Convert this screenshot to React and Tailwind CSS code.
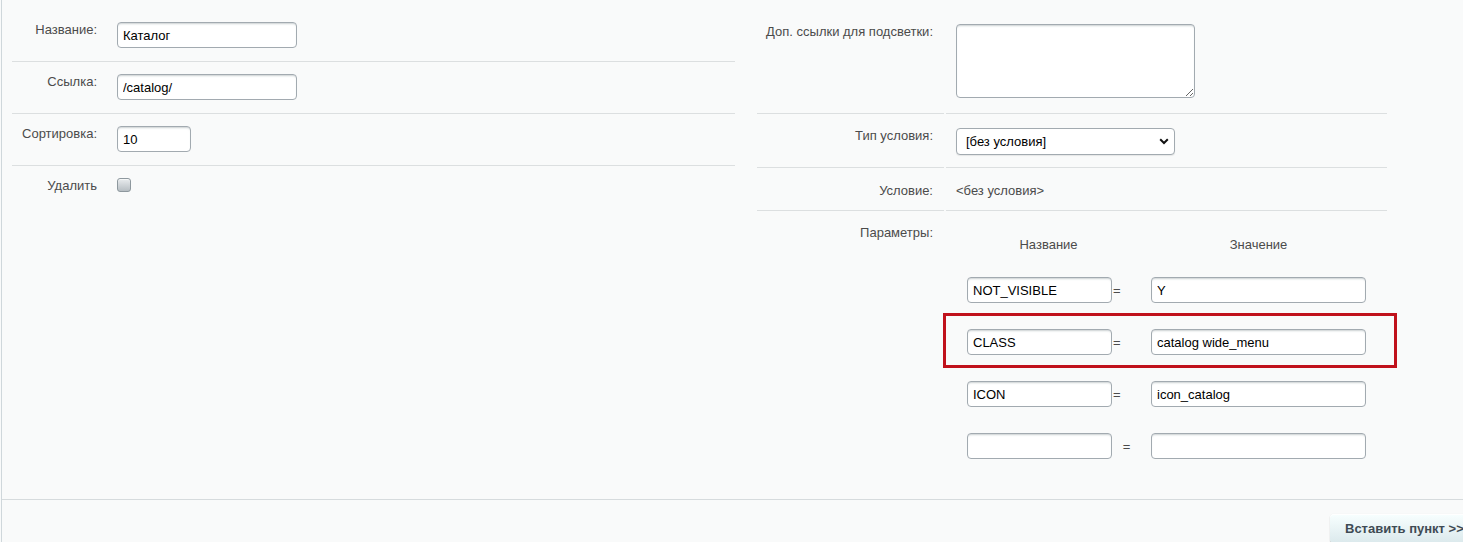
import React from "react";

const inputCls =
  "block h-[26px] rounded-[4px] border border-[#a2aab0] bg-white px-[5px] text-[13px] text-black outline-none shadow-[inset_0_2px_2px_-1px_rgba(180,188,191,0.7)]";

function LeftRow({ label, children, last }) {
  return (
    <div className={"flex " + (last ? "" : "border-b border-[#dcdfe0]")}>
      <div className="w-[95px] shrink-0 pt-[12px] pr-[10px] text-right leading-[15px] text-[#4b4b4b]">
        {label}
      </div>
      <div className="pl-[10px] pt-[12px] pb-[13px]">{children}</div>
    </div>
  );
}

function RightRow({ label, labelPt, cellCls, children, last }) {
  const b = last ? "" : "border-b border-[#dcdfe0]";
  return (
    <div className="flex gap-[2px]">
      <div
        className={
          "w-[187px] shrink-0 pr-[11px] text-right leading-[15px] text-[#4b4b4b] " +
          labelPt +
          " " +
          b
        }
      >
        {label}
      </div>
      <div className={"flex-1 pl-[10px] " + cellCls + " " + b}>{children}</div>
    </div>
  );
}

function ParamRow({ name, value, eqCentered, highlight }) {
  return (
    <div className="relative flex h-[26px] items-center">
      {highlight && (
        <div className="pointer-events-none absolute left-[-13px] top-[-16px] h-[55px] w-[454px] border-[3px] border-[#c0111b]" />
      )}
      <div className="w-[156px] shrink-0 pl-[11px]">
        <input className={inputCls + " w-[145px]"} defaultValue={name} />
      </div>
      <div
        className={
          "w-[29px] shrink-0 leading-[15px] text-[#4b4b4b] " +
          (eqCentered ? "text-center" : "pl-[1px]")
        }
      >
        =
      </div>
      <div className="pl-[10px]">
        <input className={inputCls + " w-[215px]"} defaultValue={value} />
      </div>
    </div>
  );
}

export default function App() {
  return (
    <div className="h-[542px] w-[1463px] overflow-hidden bg-[#f9fafa] font-['Liberation_Sans',Arial,sans-serif] text-[13px]">
      <div className="ml-[1px] flex h-full flex-col border-l border-[#cfd7db]">
        {/* form body */}
        <div className="flex h-[500px] shrink-0 border-b border-[#d6dbdd] pl-[10px] pt-[10px]">
          {/* left column */}
          <div className="w-[723px] shrink-0">
            <LeftRow label="Название:">
              <input className={inputCls + " w-[180px]"} defaultValue="Каталог" />
            </LeftRow>
            <LeftRow label="Ссылка:">
              <input className={inputCls + " w-[180px]"} defaultValue="/catalog/" />
            </LeftRow>
            <LeftRow label="Сортировка:">
              <input className={inputCls + " w-[74px]"} defaultValue="10" />
            </LeftRow>
            <LeftRow label="Удалить" last>
              <input
                type="checkbox"
                className="block h-[14px] w-[14px] appearance-none rounded-[3px] border border-[#8e989e] bg-gradient-to-b from-[#e9ecee] to-[#b7bec3] shadow-[inset_0_1px_0_rgba(255,255,255,0.6)]"
              />
            </LeftRow>
          </div>

          {/* right column */}
          <div className="ml-[22px] w-[630px] shrink-0">
            <RightRow
              label="Доп. ссылки для подсветки:"
              labelPt="pt-[14px]"
              cellCls="pt-[14px] pb-[15px]"
            >
              <textarea className="block h-[74px] w-[239px] rounded-[4px] border border-[#a2aab0] bg-white px-[5px] py-[3px] text-[13px] text-black outline-none shadow-[inset_0_2px_2px_-1px_rgba(180,188,191,0.7)]" />
            </RightRow>
            <RightRow
              label="Тип условия:"
              labelPt="pt-[14px]"
              cellCls="pt-[14px] pb-[12px]"
            >
              <div className="relative w-[219px]">
                <select className="block h-[27px] w-[219px] appearance-none rounded-[4px] border border-[#a2aab0] bg-white pl-[9px] text-[13px] text-black outline-none shadow-[0_1px_1px_rgba(0,0,0,0.08)]">
                  <option>[без условия]</option>
                </select>
                <svg
                  className="pointer-events-none absolute right-[6px] top-[10px]"
                  width="10"
                  height="7"
                  viewBox="0 0 10 7"
                >
                  <path
                    d="M1.2 1.3 L5 5 L8.8 1.3"
                    fill="none"
                    stroke="#111"
                    strokeWidth="2"
                  />
                </svg>
              </div>
            </RightRow>
            <RightRow
              label="Условие:"
              labelPt="pt-[15px]"
              cellCls="pt-[15px] pb-[12px] leading-[15px] text-[#4b4b4b]"
            >
              &lt;без условия&gt;
            </RightRow>
            <RightRow
              label="Параметры:"
              labelPt="pt-[14px]"
              cellCls="pt-[26px]"
              last
            >
              <div className="flex leading-[15px] text-[#4b4b4b]">
                <div className="w-[185px] text-center">Название</div>
                <div className="w-[235px] text-center">Значение</div>
              </div>
              <div className="mt-[25px] flex flex-col gap-[26px]">
                <ParamRow name="NOT_VISIBLE" value="Y" />
                <ParamRow name="CLASS" value="catalog wide_menu" highlight />
                <ParamRow name="ICON" value="icon_catalog" />
                <ParamRow name="" value="" eqCentered />
              </div>
            </RightRow>
          </div>
        </div>

        {/* button bar */}
        <div className="flex pl-[1328px] pt-[14px]">
          <button className="h-[29px] shrink-0 whitespace-nowrap rounded-[4px] bg-gradient-to-b from-[#f8ffff] to-[#dbe9ec] px-[15px] text-[13px] font-bold text-[#3f4b54] shadow-[0_0_1px_rgba(0,0,0,0.11),0_1px_1px_rgba(0,0,0,0.3),inset_0_1px_0_#fff]">
            Вставить пункт &gt;&gt;
          </button>
        </div>
      </div>
    </div>
  );
}
